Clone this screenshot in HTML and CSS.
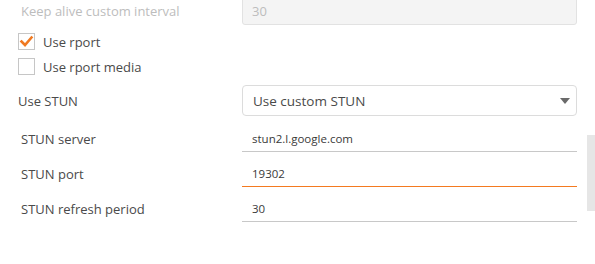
FILE: index.html
```html
<!DOCTYPE html>
<html>
<head>
<meta charset="utf-8">
<link rel="stylesheet" href="styles.css">
</head>
<body>
<div class="form">
  <div class="row row-keep">
    <div class="label label-disabled">Keep alive custom interval</div>
    <div class="input-box disabled">30</div>
  </div>
  <div class="check-row check-first">
    <span class="box checked">
      <svg width="17" height="17" viewBox="0 0 17 17"><path d="M3.5 8.5 L7 12 L13.5 4.5" fill="none" stroke="#f07a22" stroke-width="2.6" stroke-linecap="square"/></svg>
    </span>
    <span class="check-label">Use rport</span>
  </div>
  <div class="check-row check-second">
    <span class="box"></span>
    <span class="check-label">Use rport media</span>
  </div>
  <div class="row row-select">
    <div class="label label-select">Use STUN</div>
    <div class="select">
      <span>Use custom STUN</span>
      <span class="arrow"></span>
    </div>
  </div>
  <div class="row row-line">
    <div class="label">STUN server</div>
    <div class="line-input">stun2.l.google.com</div>
  </div>
  <div class="row row-line">
    <div class="label">STUN port</div>
    <div class="line-input focused">19302</div>
  </div>
  <div class="row row-line">
    <div class="label">STUN refresh period</div>
    <div class="line-input">30</div>
  </div>
</div>
<div class="scrollbar"></div>
</body>
</html>
```
FILE: styles.css
```css
html, body {
  margin: 0;
  padding: 0;
  background: #ffffff;
  overflow: hidden;
}
body {
  font-family: "Open Sans", "Noto Sans", sans-serif;
  font-size: 13px;
  color: #4a4a4a;
  width: 595px;
  height: 264px;
  position: relative;
}
.form {
  margin-top: -5px;
  width: 577px;
}
.row {
  display: grid;
  grid-template-columns: 242px 335px;
  align-items: center;
}
.label {
  padding-left: 21px;
  color: #4a4a4a;
}
.label-disabled {
  color: #bdbdbd;
  padding-top: 2px;
}
.input-box {
  box-sizing: border-box;
  height: 30px;
  border: 1px solid #e2e2e2;
  border-radius: 3px;
  padding: 2px 9px 0;
  display: flex;
  align-items: center;
}
.disabled {
  background: #f4f4f4;
  color: #bdbdbd;
}
.check-row {
  display: flex;
  align-items: center;
  padding-left: 18px;
  gap: 8px;
  height: 17px;
}
.check-first { margin-top: 8px; }
.check-second { margin-top: 8px; }
.box {
  box-sizing: border-box;
  width: 17px;
  height: 17px;
  border: 1px solid #c6c6c6;
  background: #fff;
  display: block;
  position: relative;
}
.box svg {
  position: absolute;
  left: -1px;
  top: -1px;
}
.check-label {
  color: #4a4a4a;
  padding-top: 1px;
}
.row-select {
  margin-top: 10px;
}
.label-select {
  padding-left: 18px;
}
.select {
  box-sizing: border-box;
  height: 31px;
  border: 1px solid #dcdcdc;
  border-radius: 4px;
  padding: 0 6px 0 10px;
  display: flex;
  align-items: center;
  justify-content: space-between;
  font-size: 13.5px;
  color: #4a4a4a;
}
.arrow {
  width: 0;
  height: 0;
  border-left: 5px solid transparent;
  border-right: 5px solid transparent;
  border-top: 6px solid #6a6a6a;
}
.row-line {
  height: 35px;
}
.row-line .label {
  box-sizing: border-box;
  height: 35px;
  padding-top: 9px;
  display: flex;
  align-items: center;
}
.line-input {
  box-sizing: border-box;
  height: 35px;
  border-bottom: 1px solid #c8c8c8;
  padding: 9px 10px 0;
  display: flex;
  align-items: center;
  font-size: 11.5px;
  color: #3a3a3a;
}
.row-select + .row-line {
  margin-top: 1px;
}
.focused {
  border-bottom-color: #f47a20;
}
.scrollbar {
  position: absolute;
  left: 587px;
  top: 135px;
  width: 8px;
  height: 76px;
  background: #e6e6e6;
}
```
